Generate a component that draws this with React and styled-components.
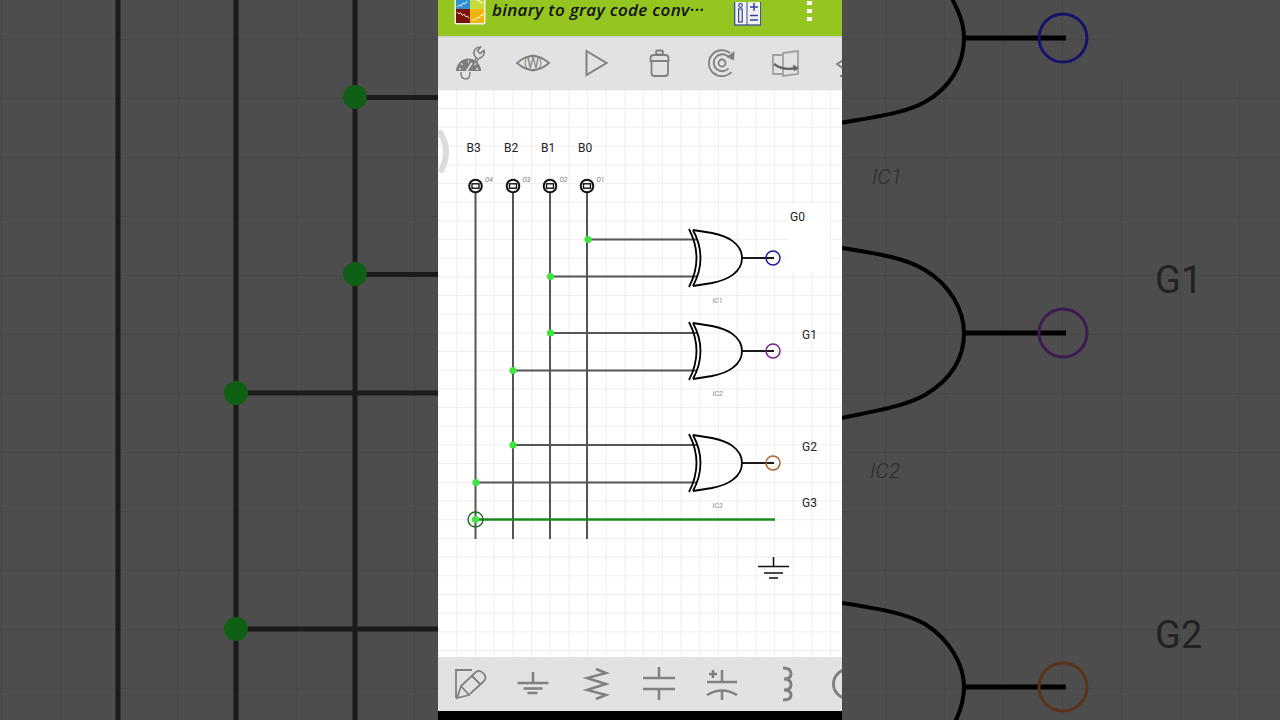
import React from 'react';
import styled, { createGlobalStyle } from 'styled-components';

const GlobalStyle = createGlobalStyle`
  html, body { margin: 0; padding: 0; background: #000; }
  body { font-family: Roboto, "Liberation Sans", sans-serif; }
`;

const GRID = 18.7;
const SIDE_GRID = 59;
const gates = [
  { y: 258, ring: '#1c1c9c', label: 'IC1' },
  { y: 351, ring: '#7a1f8f', label: 'IC2' },
  { y: 463, ring: '#a8642c', label: 'IC3' },
];
const rails = [
  { x: 475.5, name: 'B3', pin: 'O4' },
  { x: 513, name: 'B2', pin: 'O3' },
  { x: 550, name: 'B1', pin: 'O2' },
  { x: 587, name: 'B0', pin: 'O1' },
];
const taps = [
  [588, 239.5], [550.5, 276.5], [550.5, 333], [513, 370.5], [513, 445], [476, 482.5], [475.5, 519.5],
];
const outputs = [
  { x: 790, y: 220.5, text: 'G0' },
  { x: 802, y: 339, text: 'G1' },
  { x: 802, y: 451, text: 'G2' },
  { x: 802, y: 507, text: 'G3' },
];

function Icon({ children }) {
  return <svg width="40" height="40" viewBox="0 0 40 40" fill="none" stroke="#808080" strokeWidth="1.8">{children}</svg>;
}

function XorGate({ y }) {
  return (
    <g transform={`translate(690 ${y})`} fill="none" stroke="#000" strokeWidth="1.8">
      <path d="M-1 -29 Q14 0 -1 29" />
      <path d="M3 -28 Q18 0 3 28" />
      <path d="M3 -28 L22 -25 C38 -22 52 -14 52 0 C52 14 38 22 22 25 L3 28" />
      <path d="M52 0 H84" />
    </g>
  );
}

export default function App() {
  return (
    <Page>
      <GlobalStyle />
      <Side $offsetX={1} $offsetY={39}>
        <SideDrawing viewBox="0 0 438 720">
          <g stroke="#1b1b1b" strokeWidth="5" fill="none">
            <path d="M118 0 V720 M236 0 V720 M355 0 V720" />
            <path d="M355 97.5 H438 M355 274.5 H438 M236 393 H438 M236 629 H438" />
          </g>
          <g fill="#0f5f14">
            <circle cx="355" cy="97" r="12" />
            <circle cx="355" cy="274" r="12" />
            <circle cx="236" cy="393" r="12" />
            <circle cx="236" cy="629" r="12" />
          </g>
        </SideDrawing>
      </Side>

      <Phone>
        <Header>
          <Logo viewBox="0 0 32 32">
            <rect x="0.5" y="0.5" width="31" height="31" rx="2" fill="#f2f2e8" />
            <rect x="2" y="2" width="14" height="14" fill="#2b8fd0" />
            <rect x="16" y="2" width="14" height="14" fill="#c6dc3a" />
            <rect x="2" y="16" width="14" height="14" fill="#7c1206" />
            <rect x="16" y="16" width="14" height="14" fill="#f5b50a" />
            <g fill="none" stroke="#fff" strokeWidth="0.9">
              <path d="M3 19 l2 2 l1.5 -1.5 l2 3 l1.5 -1.5 l2 3 l1.5 -1 l1.5 2.5" />
              <path d="M18 28 l2 -2 l1.5 1 l2 -3 l1.5 1 l2 -3 l1.5 0.5 l1 -2" />
              <path d="M3 14 l2 -2 l2 1 l2 -3 l2 1 l2 -3" />
              <path d="M18 4 l2 2 l1.5 -1 l2 3 l1.5 -1 l2 3 l1.5 -0.5" />
            </g>
          </Logo>
          <Title>binary to gray code conv···</Title>
          <CalcIcon viewBox="0 0 27 24">
            <rect x="0.7" y="-3" width="26" height="26" fill="#f2f4ee" stroke="#3a3fa6" strokeWidth="1.2" />
            <path d="M13 -3 V23" stroke="#3a3fa6" strokeWidth="1" />
            <circle cx="6.5" cy="3.5" r="1.8" fill="none" stroke="#3a3fa6" strokeWidth="1.2" />
            <rect x="4.6" y="7" width="3.6" height="13" fill="none" stroke="#3a3fa6" strokeWidth="1.2" />
            <path d="M16 5 H24 M20 1 V9 M16 13.5 H24 M16 18 H24" stroke="#3a3fa6" strokeWidth="1.5" />
          </CalcIcon>
          <Kebab>
            <i /><i /><i />
          </Kebab>
        </Header>

        <Toolbar>
          <ToolButton>
            <Icon>
              <path d="M6 28 A12.5 12.5 0 0 1 31 28 Z" fill="#7d7d7d" stroke="none" />
              <path d="M9 26 H11 M11 20.5 L12.6 21.8 M18.5 17.5 V19.5 M26 20.5 L24.4 21.8 M26 26 H28" stroke="#e2e2e2" strokeWidth="1.3" />
              <path d="M16.5 28 L22 20" stroke="#e2e2e2" strokeWidth="1.8" />
              <path d="M11 29 Q10.5 36 16 36 Q20 36 20 29" strokeWidth="1.5" />
              <path d="M24 19 L26.5 15 Q22 11 25 6.5 Q27 4 30.5 4 L27.5 8 L30 10.5 L34 7.5 Q35 12 31 14.5 Q29.5 15.5 28.5 15.5 L27 19" strokeWidth="1.6" />
            </Icon>
          </ToolButton>
          <ToolButton>
            <Icon>
              <path d="M4 20 Q20 6 36 20 Q20 34 4 20 Z" />
              <circle cx="20" cy="20" r="8" strokeWidth="1" />
              <EyeLetter x="20" y="25">W</EyeLetter>
            </Icon>
          </ToolButton>
          <ToolButton>
            <Icon>
              <path d="M10.5 8 L30.5 20 L10.5 32 Z" strokeWidth="2" />
            </Icon>
          </ToolButton>
          <ToolButton>
            <Icon>
              <path d="M12.5 18 V30 Q12.5 33 15.5 33 H26 Q29 33 29 30 V18" />
              <path d="M11.5 15 Q11.5 12 15 12 H26 Q29.5 12 29.5 15 V18 H11.5 Z" />
              <rect x="17" y="7.5" width="7" height="4" rx="1.5" />
            </Icon>
          </ToolButton>
          <ToolButton>
            <Icon>
              <path d="M29.5 29 A13 13 0 1 1 28 10" />
              <path d="M26.5 25.5 A8.5 8.5 0 1 1 26 13.5" />
              <circle cx="20" cy="20" r="3.5" />
              <path d="M32.5 8 L32 17.5 L24.5 14 Z" fill="#808080" stroke="none" />
            </Icon>
          </ToolButton>
          <ToolButton>
            <Icon>
              <path d="M18 12 H8 V31 H18" stroke="#a0a0a0" />
              <path d="M18 10 L33 8 V31 L18 33 Z" stroke="#a0a0a0" />
              <path d="M9 21 Q18 28 30 25" stroke="#666" strokeWidth="2.4" />
              <path d="M34 25 L28 21.5 L29 28.5 Z" fill="#666" stroke="none" />
            </Icon>
          </ToolButton>
          <ToolButton>
            <Icon>
              <path d="M20 14 L9 21 L20 29 H32 M12 33 H32" />
            </Icon>
          </ToolButton>
        </Toolbar>

        <Canvas>
          <Circuit viewBox="438 90 404 567">
            <rect x="788" y="205" width="42" height="67" fill="#fff" />
            <path d="M440.5 133 Q451 150 441.5 170" fill="none" stroke="#dcdcdc" strokeWidth="6" strokeLinecap="round" />

            {rails.map(r => (
              <g key={r.name}>
                <path d={`M${r.x} 192 V539`} stroke="#555" strokeWidth="2" />
                <circle cx={r.x} cy="186" r="6.3" fill="#fff" stroke="#111" strokeWidth="2" />
                <rect x={r.x - 3.5} y="183.8" width="7" height="4.4" fill="#fff" stroke="#111" strokeWidth="1.4" />
                <WireLabel x={r.x - 9} y="152">{r.name}</WireLabel>
                <PinLabel x={r.x + 9.5} y="181.5">{r.pin}</PinLabel>
              </g>
            ))}

            <path d="M587 239.5 H697 M550 276.5 H697 M550 333 H697 M513 370.5 H697 M513 445 H697 M475 482.5 H697"
              stroke="#555" strokeWidth="2" />

            {gates.map(g => (
              <g key={g.label}>
                <XorGate y={g.y} />
                <circle cx="773" cy={g.y} r="7" fill="none" stroke={g.ring} strokeWidth="1.5" />
                <GateLabel x="717.5" y={g.y + 45}>{g.label}</GateLabel>
              </g>
            ))}

            <path d="M475 519.5 H775" stroke="#1b8a1b" strokeWidth="2.6" />
            <circle cx="475.5" cy="519.5" r="7.5" fill="none" stroke="#1c6a1c" strokeWidth="1.4" />
            {taps.map(([x, y]) => (
              <circle key={`${x}-${y}`} cx={x} cy={y} r="3.6" fill="#3fe63f" />
            ))}

            {outputs.map(o => (
              <WireLabel key={o.text} x={o.x} y={o.y}>{o.text}</WireLabel>
            ))}

            <path d="M773.5 557 V566.5 M758 566.5 H789 M764 573 H783 M769 578 H778" stroke="#111" strokeWidth="1.5" fill="none" />
          </Circuit>
        </Canvas>

        <BottomBar>
          <ToolButton>
            <Icon>
              <path d="M22 6 H6 V34" />
              <path d="M7 34 L11 22 L26 8 Q30 5 34 10 Q37 14 34 17 L19 31 Z M11 22 L19 31 M22 12 L31 21" />
            </Icon>
          </ToolButton>
          <ToolButton>
            <Icon>
              <path d="M20 8 V19 M4.5 19 H35.5 M10.5 24.5 H29.5 M14.5 29 H24.5" strokeWidth="2.5" />
            </Icon>
          </ToolButton>
          <ToolButton>
            <Icon>
              <path d="M20 5 L30 9 L11 14 L30 20 L11 26 L30 31 L20 35" strokeWidth="2.5" />
            </Icon>
          </ToolButton>
          <ToolButton>
            <Icon>
              <path d="M20 3 V14 M4 14 H36 M4 25 H36 M20 25 V36" strokeWidth="2.5" />
            </Icon>
          </ToolButton>
          <ToolButton>
            <Icon>
              <path d="M20 6 V18 M5 18 H35 M5 31 Q20 22 35 31 M20 26 V36 M7 10 H15 M11 6 V14" strokeWidth="2.5" />
            </Icon>
          </ToolButton>
          <ToolButton>
            <Icon>
              <path d="M18 4 Q26 4 26 9.5 Q26 15 19 15 Q26 15 26 20.5 Q26 26 19 26 Q26 26 26 31 Q26 36 18 36" strokeWidth="3" />
            </Icon>
          </ToolButton>
          <ToolButton>
            <Icon>
              <circle cx="20" cy="20" r="14.5" strokeWidth="3" />
            </Icon>
          </ToolButton>
        </BottomBar>
        <NavStrip />
      </Phone>

      <Side $offsetX={43} $offsetY={39}>
        <SideDrawing viewBox="842 0 438 720">
          <rect x="1112" y="0" width="168" height="80" fill="#4d4d4d" />
          <g fill="none" stroke="#000" strokeWidth="4">
            <path d="M842 122.7 C880 116 905 113 925 102 C950 88 964 65 964 38 C964 22 958 10 950 -5" />
            <path d="M842 248 C880 254 905 258 925 270 C950 285 964 310 964 333 C964 360 950 380 925 395 C905 406 880 410 842 418" />
            <path d="M842 603 C880 609 905 613 925 624 C950 640 964 665 964 687 C964 700 960 712 955 722" />
            <path d="M964 38 H1066 M964 333 H1066 M964 687 H1066" strokeWidth="5" />
          </g>
          <g fill="none" strokeWidth="3">
            <circle cx="1063" cy="38" r="24" stroke="#14146a" />
            <circle cx="1063" cy="333" r="24" stroke="#3d1a50" />
            <circle cx="1063" cy="687" r="24" stroke="#5a3218" />
          </g>
          <BigGateLabel x="872" y="184">IC1</BigGateLabel>
          <BigGateLabel x="870" y="478">IC2</BigGateLabel>
          <BigWireLabel x="1155" y="293">G1</BigWireLabel>
          <BigWireLabel x="1155" y="648">G2</BigWireLabel>
        </SideDrawing>
      </Side>
    </Page>
  );
}

//CSS//
const Page = styled.div`
width: 1280px;
height: 720px;
display: flex;
overflow: hidden;
`

const Side = styled.div`
flex: 0 0 438px;
height: 720px;
background-color: #4d4d4d;
background-image:
    linear-gradient(to right, #474747 1px, transparent 1px),
    linear-gradient(to bottom, #474747 1px, transparent 1px);
background-size: ${SIDE_GRID}px ${SIDE_GRID}px;
background-position: ${p => p.$offsetX}px ${p => p.$offsetY}px;
`

const SideDrawing = styled.svg`
display: block;
width: 438px;
height: 720px;
`

const Phone = styled.div`
flex: 0 0 404px;
width: 404px;
min-width: 0;
height: 720px;
display: flex;
flex-direction: column;
background: #000;
overflow: hidden;
`

const Header = styled.div`
flex: 0 0 36px;
box-sizing: border-box;
display: flex;
align-items: flex-end;
padding: 0 0 11px 16px;
background: #95c521;
overflow: hidden;
`

const Logo = styled.svg`
flex: 0 0 32px;
width: 32px;
height: 32px;
`

const Title = styled.div`
flex: 0 0 228px;
margin-left: 6px;
margin-bottom: 5px;
font-family: "Open Sans", "Liberation Sans", sans-serif;
font-style: italic;
font-weight: 600;
font-size: 17px;
line-height: 20px;
letter-spacing: 0.3px;
color: #111;
white-space: nowrap;
`

const CalcIcon = styled.svg`
flex: 0 0 27px;
width: 27px;
height: 24px;
margin-left: 14px;
margin-bottom: -1px;
`

const Kebab = styled.div`
display: flex;
flex-direction: column;
gap: 4px;
margin-left: 46px;
margin-bottom: 4px;

i {
    display: block;
    width: 5px;
    height: 4px;
    background: #fff;
}
`

const Toolbar = styled.div`
flex: 0 0 54px;
display: flex;
align-items: center;
background: #e2e2e2;
overflow: hidden;
box-shadow: inset 0 2px 2px -1px rgba(0,0,0,.12);
`

const BottomBar = styled(Toolbar)`
flex-basis: 54px;
box-shadow: none;
`

const ToolButton = styled.div`
flex: 0 0 63px;
height: 40px;
display: flex;
justify-content: center;
`

const EyeLetter = styled.text`
font-family: Roboto, sans-serif;
font-size: 14px;
fill: #808080;
stroke: none;
text-anchor: middle;
`

const Canvas = styled.div`
flex: 0 0 567px;
background-color: #fff;
background-image:
    linear-gradient(to right, #eeeeee 1px, transparent 1px),
    linear-gradient(to bottom, #eeeeee 1px, transparent 1px);
background-size: ${GRID}px ${GRID}px;
background-position: 18.3px 18.1px;
overflow: hidden;
`

const Circuit = styled.svg`
display: block;
width: 404px;
height: 567px;
`

const WireLabel = styled.text`
font-family: Roboto, sans-serif;
font-size: 12px;
fill: #222;
`

const PinLabel = styled.text`
font-family: Roboto, sans-serif;
font-style: italic;
font-size: 6.5px;
fill: #777;
`

const GateLabel = styled.text`
font-family: Roboto, sans-serif;
font-style: italic;
font-size: 7px;
fill: #888;
text-anchor: middle;
`

const BigGateLabel = styled.text`
font-family: Roboto, sans-serif;
font-style: italic;
font-weight: 300;
font-size: 21px;
fill: #2c2c2c;
`

const BigWireLabel = styled.text`
font-family: Roboto, sans-serif;
font-size: 38px;
fill: #222;
`

const NavStrip = styled.div`
flex: 1;
background: #000;
`
